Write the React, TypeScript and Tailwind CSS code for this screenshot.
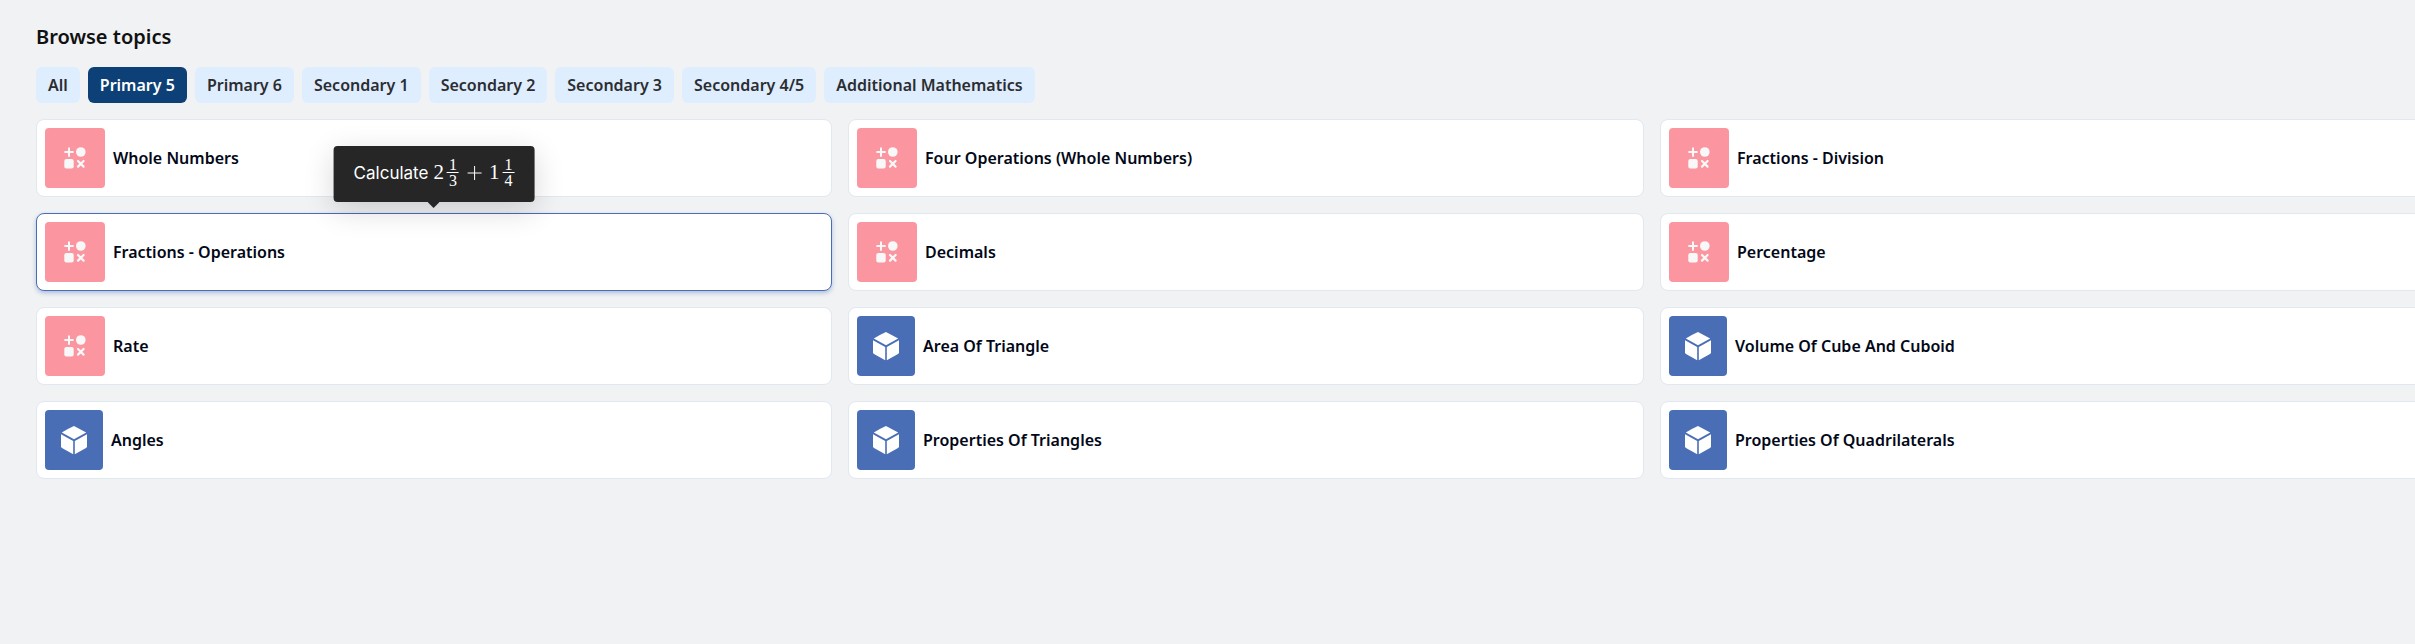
const levels = [
  'All',
  'Primary 5',
  'Primary 6',
  'Secondary 1',
  'Secondary 2',
  'Secondary 3',
  'Secondary 4/5',
  'Additional Mathematics',
];

type Kind = 'number' | 'geometry';

const topics: { name: string; kind: Kind; hint?: boolean }[] = [
  { name: 'Whole Numbers', kind: 'number' },
  { name: 'Four Operations (Whole Numbers)', kind: 'number' },
  { name: 'Fractions - Division', kind: 'number' },
  { name: 'Fractions - Operations', kind: 'number', hint: true },
  { name: 'Decimals', kind: 'number' },
  { name: 'Percentage', kind: 'number' },
  { name: 'Rate', kind: 'number' },
  { name: 'Area Of Triangle', kind: 'geometry' },
  { name: 'Volume Of Cube And Cuboid', kind: 'geometry' },
  { name: 'Angles', kind: 'geometry' },
  { name: 'Properties Of Triangles', kind: 'geometry' },
  { name: 'Properties Of Quadrilaterals', kind: 'geometry' },
];

function NumberIcon() {
  return (
    <svg viewBox="0 0 60 60" className="h-15 w-15 shrink-0 rounded bg-[#fb96a0]" aria-hidden="true">
      <g fill="#f8f8f8">
        <circle cx="35.8" cy="24" r="4.8" />
        <rect x="19.3" y="31" width="9.4" height="9.6" rx="2" />
      </g>
      <g stroke="#f8f8f8" strokeWidth="2" strokeLinecap="round">
        <path d="M24 20.2v7.8M20.1 24.1h7.8" />
        <path d="M33 33l5.6 5.6M38.6 33L33 38.6" strokeWidth="2.2" />
      </g>
    </svg>
  );
}

function CubeIcon() {
  return (
    <svg viewBox="0 0 58 60" className="h-15 w-[58px] shrink-0 rounded bg-[#496eb6]" aria-hidden="true">
      <g fill="#fff">
        <path d="M29 16l12.2 6.6L29 29.3l-12.2-6.7Q23 18.6 29 16z" />
        <path d="M16 24.2l12.2 6.8v13.2l-11.2-6.2q-1-.6-1-1.7z" />
        <path d="M42 24.2l-12.2 6.8v13.2l11.2-6.2q1-.6 1-1.7z" />
      </g>
    </svg>
  );
}

function Fraction({ top, bottom }: { top: string; bottom: string }) {
  return (
    <span className="ml-[3px] inline-flex flex-col items-center text-base leading-[14px]">
      <span className="border-b border-white px-0.5">{top}</span>
      <span className="px-0.5 pt-px">{bottom}</span>
    </span>
  );
}

function HintTooltip() {
  return (
    <div
      role="tooltip"
      className="absolute bottom-full left-1/2 z-10 mb-[11px] flex h-14 -translate-x-1/2 items-center rounded bg-[#262626] px-5 whitespace-nowrap text-white shadow-[0_8px_30px_rgba(0,0,0,0.16)]"
    >
      <span className="mr-[5px] font-['Inter',sans-serif] text-[17px]">Calculate</span>
      <span className="flex items-center pb-0.5 font-['Liberation_Serif',serif] text-[21px]">
        2
        <Fraction top="1" bottom="3" />
        <svg viewBox="0 0 16 16" className="mr-1.5 ml-2 h-4 w-4" role="img" aria-label="plus">
          <path d="M8 1v14M1 8h14" stroke="#fff" strokeWidth="1" />
        </svg>
        1
        <Fraction top="1" bottom="4" />
      </span>
      <svg viewBox="0 0 12 6" className="absolute top-full left-1/2 h-[6px] w-3 -translate-x-1/2" aria-hidden="true">
        <path d="M0 0h12L6 6z" fill="#262626" />
      </svg>
    </div>
  );
}

export default function App() {
  return (
    <main className="min-h-screen overflow-hidden bg-[#f0f2f4] px-9 pt-[22px] pb-9 font-['Noto_Sans',sans-serif]">
      <h1 className="text-xl leading-[30px] font-semibold text-[#111]">Browse topics</h1>
      <nav className="mt-[15px] flex flex-wrap gap-2" aria-label="Levels">
        {levels.map((level) => (
          <button
            key={level}
            type="button"
            aria-pressed={level === 'Primary 5'}
            className={
              level === 'Primary 5'
                ? 'h-9 rounded-md bg-[#0c4076] px-3 text-base font-semibold text-white'
                : 'h-9 rounded-md bg-[#dfeefe] px-3 text-base font-semibold text-[#2b2d31]'
            }
          >
            {level}
          </button>
        ))}
      </nav>
      <div className="mt-4 -mr-[77px] grid grid-cols-3 gap-4">
        {topics.map((topic) => (
          <div key={topic.name} className="relative">
            <a
              href="#"
              className={
                topic.hint
                  ? 'flex items-center gap-2 rounded-lg border border-[#496eb6] bg-white p-2 shadow-[0_2px_4px_rgba(73,110,182,0.4)]'
                  : 'flex items-center gap-2 rounded-lg border border-[#e2e8f0] bg-white p-2'
              }
            >
              {topic.kind === 'number' ? <NumberIcon /> : <CubeIcon />}
              <span className="text-base font-semibold text-[#020817]">{topic.name}</span>
            </a>
            {topic.hint && <HintTooltip />}
          </div>
        ))}
      </div>
    </main>
  );
}
